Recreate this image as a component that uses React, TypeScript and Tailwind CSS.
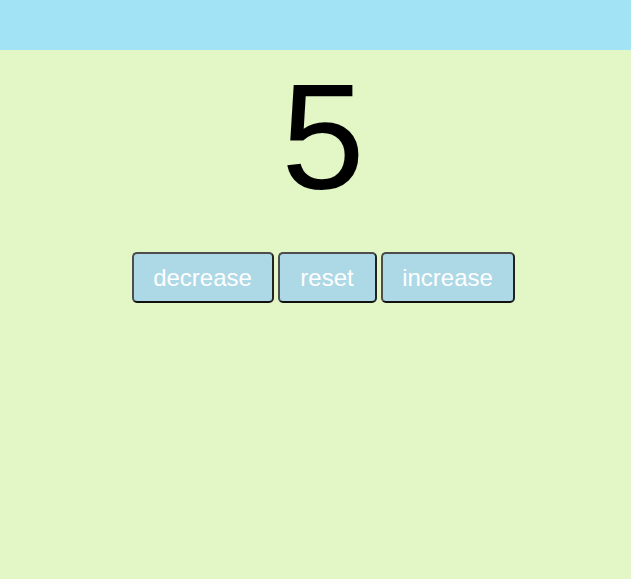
import React, { useState } from 'react';

export default function App() {
  const [count, setCount] = useState(5);

  const btn =
    'h-[51px] px-[19px] bg-[#add8e6] text-white text-[24px] border-2 border-[#4d4d4d] border-b-[#111] border-r-[#222] rounded-[5px] leading-none';

  return (
    <div className="min-h-[579px] bg-[#e3f6c6] font-['Liberation_Sans',Arial,sans-serif]">
      <header className="h-[50px] bg-[#a3e3f6]" />
      <main className="flex flex-col items-center pl-[15px]">
        <h1 className="mt-[3px] text-[150px] leading-[168px] text-black">{count}</h1>
        <div className="mt-[31px] flex gap-[4px]">
          <button className={`${btn} w-[142px]`} onClick={() => setCount(count - 1)}>decrease</button>
          <button className={`${btn} w-[99px]`} onClick={() => setCount(0)}>reset</button>
          <button className={`${btn} w-[134px]`} onClick={() => setCount(count + 1)}>increase</button>
        </div>
      </main>
    </div>
  );
}
